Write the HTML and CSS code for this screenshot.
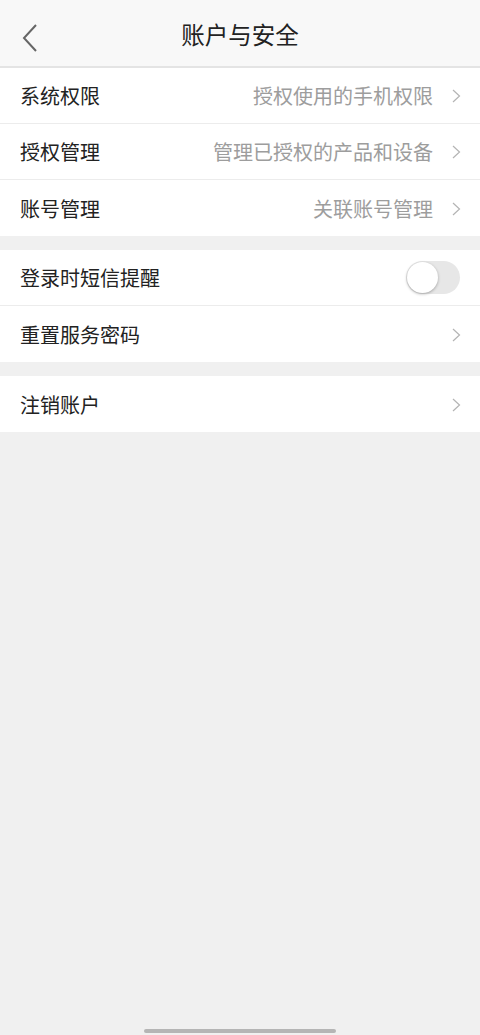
FILE: index.html
```
<!DOCTYPE html>
<html lang="zh-CN">
<head>
    <meta charset="UTF-8">
    <meta name="viewport" content="width=device-width, initial-scale=1.0">
    <title>账户与安全</title>
    <link rel="stylesheet" href="styles.css">
</head>
<body>
    <div class="page">
        <header class="nav">
            <span class="back">
                <svg width="18" height="28" viewBox="0 0 18 28"><path d="M15 1 L3 14 L15 27" fill="none" stroke="#666" stroke-width="2"/></svg>
            </span>
            <h1>账户与安全</h1>
        </header>

        <div class="group">
            <div class="row">
                <span class="label">系统权限</span>
                <span class="value">授权使用的手机权限</span>
                <span class="arrow"><svg width="9" height="14" viewBox="0 0 9 14"><path d="M1 1 L7.5 7 L1 13" fill="none" stroke="#b4b4b4" stroke-width="1.2"/></svg></span>
            </div>
            <div class="row">
                <span class="label">授权管理</span>
                <span class="value">管理已授权的产品和设备</span>
                <span class="arrow"><svg width="9" height="14" viewBox="0 0 9 14"><path d="M1 1 L7.5 7 L1 13" fill="none" stroke="#b4b4b4" stroke-width="1.2"/></svg></span>
            </div>
            <div class="row">
                <span class="label">账号管理</span>
                <span class="value">关联账号管理</span>
                <span class="arrow"><svg width="9" height="14" viewBox="0 0 9 14"><path d="M1 1 L7.5 7 L1 13" fill="none" stroke="#b4b4b4" stroke-width="1.2"/></svg></span>
            </div>
        </div>

        <div class="group">
            <div class="row">
                <span class="label">登录时短信提醒</span>
                <span class="switch"><span class="knob"></span></span>
            </div>
            <div class="row">
                <span class="label">重置服务密码</span>
                <span class="arrow"><svg width="9" height="14" viewBox="0 0 9 14"><path d="M1 1 L7.5 7 L1 13" fill="none" stroke="#b4b4b4" stroke-width="1.2"/></svg></span>
            </div>
        </div>

        <div class="group">
            <div class="row">
                <span class="label">注销账户</span>
                <span class="arrow"><svg width="9" height="14" viewBox="0 0 9 14"><path d="M1 1 L7.5 7 L1 13" fill="none" stroke="#b4b4b4" stroke-width="1.2"/></svg></span>
            </div>
        </div>

        <div class="home-bar"></div>
    </div>
</body>
</html>
```

FILE: styles.css
```
body {
    margin: 0;
    padding: 0;
    background-color: #f0f0f0;
    font-family: "Noto Sans CJK SC", "Noto Sans", sans-serif;
}

.page {
    position: relative;
    width: 480px;
    height: 1035px;
    background-color: #f0f0f0;
}

.nav {
    height: 66px;
    background-color: #f8f8f8;
    border-bottom: 2px solid #e4e4e4;
    display: flex;
    align-items: center;
    justify-content: center;
    position: relative;
}

.nav h1 {
    margin: 4px 0 0;
    font-size: 23.5px;
    font-weight: 400;
    color: #222;
    line-height: 1;
}

.back {
    position: absolute;
    left: 21px;
    top: 24px;
    display: flex;
}

.group {
    background-color: #fff;
    margin-bottom: 14px;
}

.row {
    height: 55px;
    display: flex;
    align-items: center;
    padding: 0 19px 0 20px;
    border-bottom: 1px solid #ececec;
}

.row:last-child {
    height: 56px;
    border-bottom: none;
}

.label {
    flex: 1;
    font-size: 20px;
    color: #222;
}

.value {
    font-size: 20px;
    color: #9d9d9d;
    margin-right: 19px;
}

.arrow {
    display: flex;
    padding-top: 1px;
}

.switch {
    width: 54px;
    height: 33px;
    border-radius: 17px;
    background-color: #e7e7e7;
    display: flex;
    align-items: center;
    margin-right: 1px;
}

.knob {
    width: 31px;
    height: 31px;
    border-radius: 50%;
    background-color: #fff;
    box-shadow: 0 1px 3px rgba(0, 0, 0, 0.3);
    margin-left: 1px;
}

.home-bar {
    position: absolute;
    left: 144px;
    bottom: 2px;
    width: 192px;
    height: 4px;
    border-radius: 2px;
    background-color: #b5b5b5;
}
```
